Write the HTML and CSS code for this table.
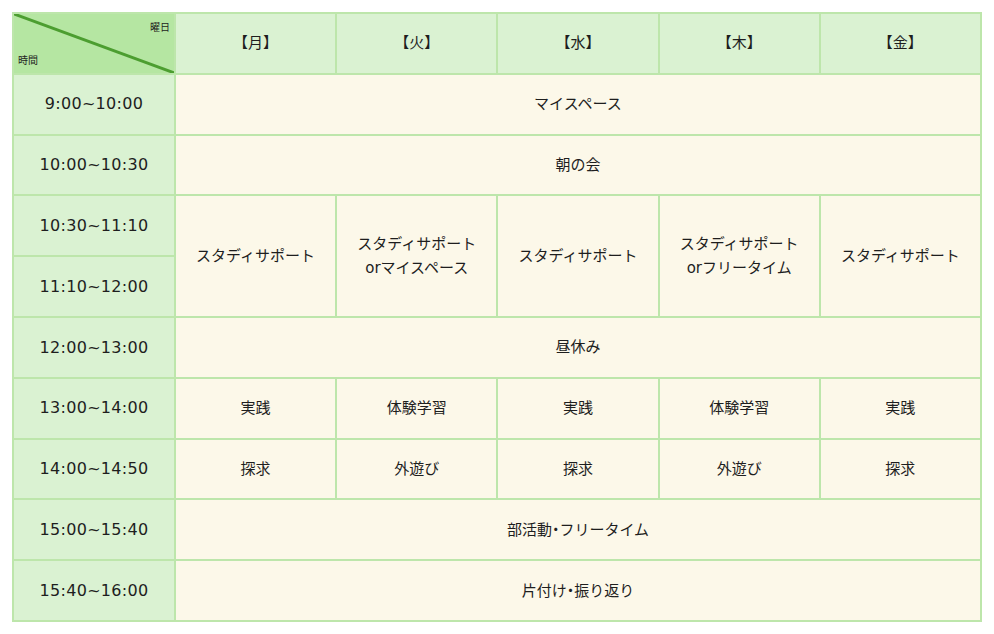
FILE: index.html
```html
<!DOCTYPE html>
<html lang="ja">
<head>
<meta charset="utf-8">
<title>時間割</title>
<link rel="stylesheet" href="styles.css">
</head>
<body>
<div class="wrap">
<table class="tt">
  <colgroup>
    <col class="c-time">
    <col class="c-day"><col class="c-day"><col class="c-day"><col class="c-day"><col class="c-day">
  </colgroup>
  <thead>
    <tr>
      <th class="corner">
        <svg class="diag" viewBox="0 0 100 100" preserveAspectRatio="none" aria-hidden="true"><line x1="0" y1="0" x2="100" y2="100" vector-effect="non-scaling-stroke"/></svg>
        <span class="lbl-day">曜日</span>
        <span class="lbl-time">時間</span>
      </th>
      <th class="day">【月】</th>
      <th class="day">【火】</th>
      <th class="day">【水】</th>
      <th class="day">【木】</th>
      <th class="day">【金】</th>
    </tr>
  </thead>
  <tbody>
    <tr><th class="time">9:00~10:00</th><td colspan="5">マイスペース</td></tr>
    <tr><th class="time">10:00~10:30</th><td colspan="5">朝の会</td></tr>
    <tr><th class="time">10:30~11:10</th>
      <td rowspan="2">スタディサポート</td>
      <td rowspan="2">スタディサポート<br>orマイスペース</td>
      <td rowspan="2">スタディサポート</td>
      <td rowspan="2">スタディサポート<br>orフリータイム</td>
      <td rowspan="2">スタディサポート</td>
    </tr>
    <tr><th class="time">11:10~12:00</th></tr>
    <tr><th class="time">12:00~13:00</th><td colspan="5">昼休み</td></tr>
    <tr><th class="time">13:00~14:00</th><td>実践</td><td>体験学習</td><td>実践</td><td>体験学習</td><td>実践</td></tr>
    <tr><th class="time">14:00~14:50</th><td>探求</td><td>外遊び</td><td>探求</td><td>外遊び</td><td>探求</td></tr>
    <tr><th class="time">15:00~15:40</th><td colspan="5">部活動<span class="dot">・</span>フリータイム</td></tr>
    <tr><th class="time">15:40~16:00</th><td colspan="5">片付け<span class="dot">・</span>振り返り</td></tr>
  </tbody>
</table>
</div>
</body>
</html>
```
FILE: styles.css
```css
html, body {
  margin: 0;
  padding: 0;
  background: #ffffff;
}
.wrap {
  padding: 12px;
}
.tt {
  border-collapse: collapse;
  width: 970px;
  table-layout: fixed;
  font-family: "DejaVu Sans", "Noto Sans CJK JP", sans-serif;
  font-size: 15px;
  color: #1e1e1e;
  line-height: 1.6;
}
.tt tr {
  height: 60.8px;
}
.c-time { width: 162px; }
.tt th, .tt td {
  border: 2px solid #bde6ab;
  text-align: center;
  vertical-align: middle;
  font-weight: normal;
  padding: 0 4px;
}
.tt td {
  background: #fcf8e9;
}
.tt th.time {
  background: #daf2d2;
  font-size: 16px;
  letter-spacing: 0.3px;
}
.tt th.day {
  background: #daf2d2;
}
.dot {
  font-feature-settings: "halt";
}
.tt th.corner {
  background: #b5e6a2;
  position: relative;
  padding: 0;
}
.diag {
  position: absolute;
  left: 0;
  top: 0;
  width: 100%;
  height: 100%;
}
.diag line {
  stroke: #4c9e30;
  stroke-width: 3;
}
.lbl-day {
  position: absolute;
  right: 4px;
  top: 8px;
  font-size: 10px;
  line-height: 1.2;
}
.lbl-time {
  position: absolute;
  left: 4px;
  bottom: 6px;
  font-size: 10px;
  line-height: 1.2;
}
```
